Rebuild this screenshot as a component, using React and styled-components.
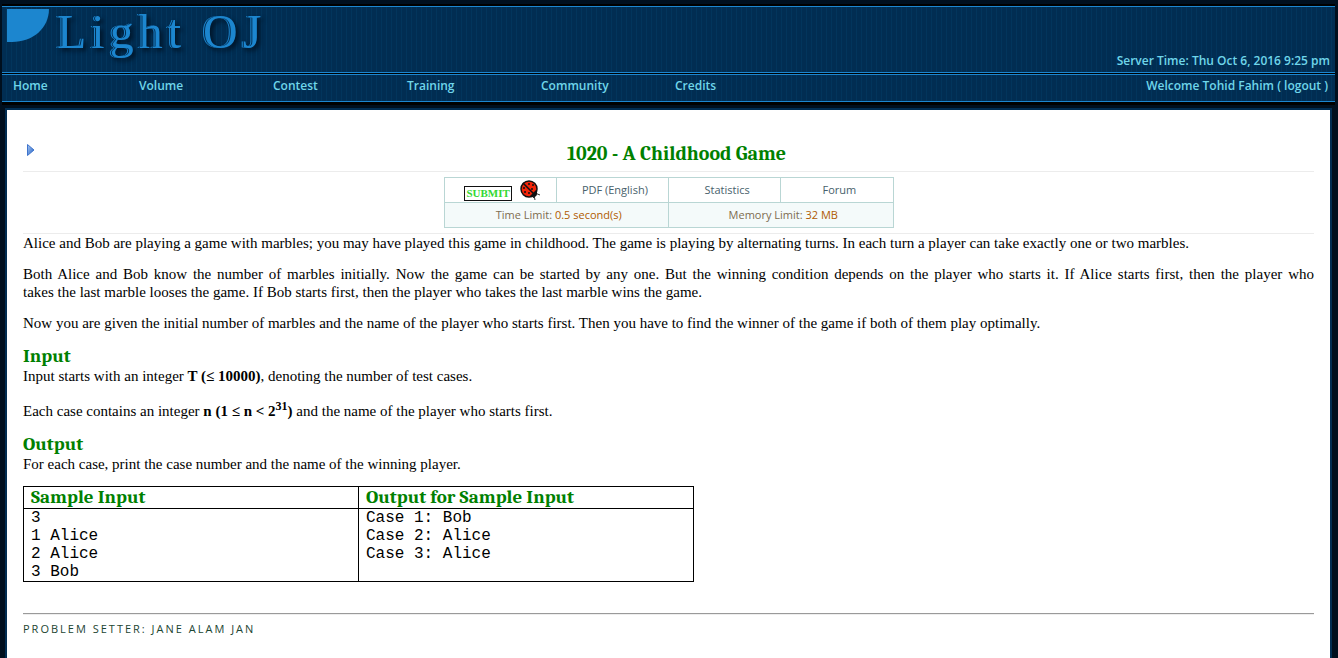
import React from "react";
import styled, { createGlobalStyle } from "styled-components";

const colors = {
  line: "#1c86cf",
  navy: "#012d52",
  stripe: "#02355c",
  link: "#6fd6ea",
  green: "#008000",
  cell: "#b9d6d4",
};

const sans = '"Trebuchet MS", "Open Sans", sans-serif';
const serif = '"Liberation Serif", "Times New Roman", serif';
const headingFont = 'Cambria, "DejaVu Serif Condensed", "DejaVu Serif", serif';

const GlobalStyle = createGlobalStyle`
  *, *::before, *::after { box-sizing: border-box; }
  html { background: #000f1e; }
  body { margin: 0; color: #000; font-family: ${serif}; font-size: 15px; line-height: 18px; }
  #root { min-height: 100vh; display: flex; flex-direction: column; }
`;

const Page = styled.div`
  display: flex;
  flex-direction: column;
  flex: 1;
  padding-top: 4px;
`;

const Header = styled.header`
  margin: 0 3px 0 2px;
  padding: 2px 0 3px;
  background: #000;
  color: ${colors.link};
  font: 600 12px/16px ${sans};
`;

const Band = styled.div`
  display: flex;
  border: solid ${colors.line};
  border-width: 1px 0;
  background: repeating-linear-gradient(90deg, ${colors.navy} 0 4px, ${colors.stripe} 4px 5px);
`;

const Banner = styled(Band)`
  min-height: 67px;
  margin-bottom: 1px;
  padding: 2px 5px 3px;
  justify-content: space-between;
`;

const Logo = styled.a`
  display: flex;
  align-items: flex-start;
  gap: 8px;
  text-decoration: none;
`;

const Wordmark = styled.span`
  color: ${colors.line};
  font: 48px/46px ${serif};
  letter-spacing: 5px;
  text-shadow: -1px 0 ${colors.navy}, -2px 0 ${colors.line};
  filter: drop-shadow(3px 3px 2px #001529);
`;

const ServerTime = styled.div`
  align-self: flex-end;
`;

const NavBand = styled(Band)`
  min-height: 28px;
  padding: 3px 7px 7px 3px;
  justify-content: space-between;
`;

const Nav = styled.nav`
  display: flex;
`;

const NavLink = styled.a`
  width: 134px;
  color: inherit;
  text-decoration: none;
  &:first-child { padding-left: 8px; }
`;

const PlainLink = styled.a`
  color: inherit;
  text-decoration: none;
`;

const Content = styled.main`
  flex: 1;
  margin: 3px 6px 0 5px;
  padding: 33px 16px 20px;
  border: solid ${colors.navy};
  border-width: 2px 2px 0;
  background: #fff;
`;

const TitleRow = styled.div`
  display: flex;
  align-items: flex-start;
  padding-bottom: 6px;
  border-bottom: 1px solid #ececec;
`;

const Expand = styled.button`
  display: flex;
  width: 16px;
  margin: 0;
  padding: 1px 4px;
  border: 0;
  background: none;
`;

const Title = styled.h1`
  flex: 1;
  margin: 0;
  color: ${colors.green};
  font: bold 20px/22px ${headingFont};
  text-align: center;
`;

const InfoArea = styled.div`
  padding: 5px 0;
  border-bottom: 1px solid #ececec;
`;

const InfoTable = styled.table`
  width: 450px;
  margin: 0 auto;
  border-collapse: collapse;
  table-layout: fixed;
  color: #47616b;
  font: 11px/16px ${sans};
`;

const InfoCell = styled.td`
  height: 25px;
  padding: 0 0 0 5px;
  border: 1px solid ${colors.cell};
  text-align: center;
  color: ${(p) => (p.$limit ? "#7d6c50" : "inherit")};
  background: ${(p) => (p.$limit ? "#f4fafa" : "#fff")};
`;

const Value = styled.span`
  color: #b05a00;
`;

const Submit = styled.a`
  display: flex;
  align-items: flex-end;
  justify-content: center;
  gap: 8px;
  height: 21px;
  text-decoration: none;
`;

const SubmitLabel = styled.span`
  padding: 0 1px;
  border: 1px solid #111;
  color: #33d833;
  font: bold 11px/13px ${serif};
`;

const Paragraph = styled.p`
  margin: 0 0 ${(p) => p.$gap || 13}px;
  text-align: justify;
  sup { line-height: 0; font-size: 12px; }
`;

const SectionTitle = styled.h2`
  margin: 0;
  padding-top: 1px;
  color: ${colors.green};
  font: bold 19px/21px ${headingFont};
`;

const SampleTable = styled.table`
  width: 671px;
  border-collapse: collapse;
  table-layout: fixed;
  th, td { border: 1px solid #000; padding: 0 7px; text-align: left; vertical-align: top; }
  th { color: ${colors.green}; font: bold 19px/21px ${headingFont}; }
  pre { margin: 0; font: 16px/18px "Liberation Mono", "Courier New", monospace; }
`;

const Rule = styled.hr`
  margin: 31px 0 5px;
  border: solid;
  border-width: 1px 0;
  border-color: #9a9a9a #eee #eee;
`;

const Setter = styled.footer`
  color: #1c4532;
  font: 11px/18px ${sans};
  letter-spacing: 2px;
  text-transform: uppercase;
`;

const Corner = () => (
  <svg width="42" height="33" viewBox="0 0 42 33" aria-hidden="true">
    <path d="M0 0H42C42 19 26 33 5 33H0Z" fill={colors.line} />
  </svg>
);

const Arrow = () => (
  <svg width="8" height="12" viewBox="0 0 8 12" aria-hidden="true">
    <defs>
      <linearGradient id="arrow" x1="0" y1="0" x2="1" y2="1">
        <stop offset="0" stopColor="#a9c8f2" />
        <stop offset="1" stopColor="#1f5fc4" />
      </linearGradient>
    </defs>
    <path d="M.5.5 7 6 .5 11.5Z" fill="url(#arrow)" stroke="#3f74cc" />
  </svg>
);

const Ladybug = () => (
  <svg width="21" height="21" viewBox="0 0 21 21" aria-hidden="true">
    <path d="M14 15 15 20M15 13 20 15M12 16 14 18" fill="none" stroke="#333" />
    <circle cx="9" cy="9" r="8" fill="#f32408" stroke="#111" strokeWidth="1.5" />
    <path d="M3 3 15 15" stroke="#111" strokeWidth="1.5" />
    <path d="M10 16 16 10C18 13 17 17 14 17Z" fill="#111" />
    <g fill="#111">
      <circle cx="9" cy="4" r="1" />
      <circle cx="13" cy="5" r="1" />
      <circle cx="12" cy="9" r="1" />
      <circle cx="4" cy="8" r="1" />
      <circle cx="5" cy="12" r="1" />
      <circle cx="9" cy="13" r="1" />
    </g>
  </svg>
);

const navItems = ["Home", "Volume", "Contest", "Training", "Community", "Credits"];

export default function App() {
  return (
    <Page>
      <GlobalStyle />
      <Header>
        <Banner>
          <Logo href="#home">
            <Corner />
            <Wordmark>Light OJ</Wordmark>
          </Logo>
          <ServerTime>Server Time: Thu Oct 6, 2016 9:25 pm</ServerTime>
        </Banner>
        <NavBand>
          <Nav>
            {navItems.map((item) => (
              <NavLink key={item} href={`#${item.toLowerCase()}`}>{item}</NavLink>
            ))}
          </Nav>
          <div>
            Welcome Tohid Fahim ( <PlainLink href="#logout">logout</PlainLink> )
          </div>
        </NavBand>
      </Header>
      <Content>
        <TitleRow>
          <Expand type="button" aria-label="Show menu"><Arrow /></Expand>
          <Title>1020 - A Childhood Game</Title>
        </TitleRow>
        <InfoArea>
          <InfoTable>
            <tbody>
              <tr>
                <InfoCell>
                  <Submit href="#submit"><SubmitLabel>SUBMIT</SubmitLabel><Ladybug /></Submit>
                </InfoCell>
                <InfoCell><PlainLink href="#pdf">PDF (English)</PlainLink></InfoCell>
                <InfoCell><PlainLink href="#statistics">Statistics</PlainLink></InfoCell>
                <InfoCell><PlainLink href="#forum">Forum</PlainLink></InfoCell>
              </tr>
              <tr>
                <InfoCell $limit colSpan={2}>Time Limit: <Value>0.5 second(s)</Value></InfoCell>
                <InfoCell $limit colSpan={2}>Memory Limit: <Value>32 MB</Value></InfoCell>
              </tr>
            </tbody>
          </InfoTable>
        </InfoArea>
        <Paragraph>
          Alice and Bob are playing a game with marbles; you may have played this game in childhood. The game is playing by alternating turns. In each turn a player can take exactly one or two marbles.
        </Paragraph>
        <Paragraph>
          Both Alice and Bob know the number of marbles initially. Now the game can be started by any one. But the winning condition depends on the player who starts it. If Alice starts first, then the player who takes&nbsp;the&nbsp;last marble looses the game. If Bob starts first, then the player who takes the last marble wins the game.
        </Paragraph>
        <Paragraph>
          Now you are given the initial number of marbles and the name of the player who starts first. Then you have to find the winner of the game if both of them play optimally.
        </Paragraph>
        <SectionTitle>Input</SectionTitle>
        <Paragraph $gap={17}>
          Input starts with an integer <b>T (≤ 10000)</b>, denoting the number of test cases.
        </Paragraph>
        <Paragraph>
          Each case contains an integer <b>n (1 ≤ n &lt; 2<sup>31</sup>)</b> and the name of the player who starts first.
        </Paragraph>
        <SectionTitle>Output</SectionTitle>
        <Paragraph $gap={13}>
          For each case, print the case number and the name of the winning player.
        </Paragraph>
        <SampleTable>
          <thead>
            <tr>
              <th scope="col">Sample Input</th>
              <th scope="col">Output for Sample Input</th>
            </tr>
          </thead>
          <tbody>
            <tr>
              <td><pre>{"3\n1 Alice\n2 Alice\n3 Bob"}</pre></td>
              <td><pre>{"Case 1: Bob\nCase 2: Alice\nCase 3: Alice"}</pre></td>
            </tr>
          </tbody>
        </SampleTable>
        <Rule />
        <Setter>Problem Setter: Jane Alam Jan</Setter>
      </Content>
    </Page>
  );
}
